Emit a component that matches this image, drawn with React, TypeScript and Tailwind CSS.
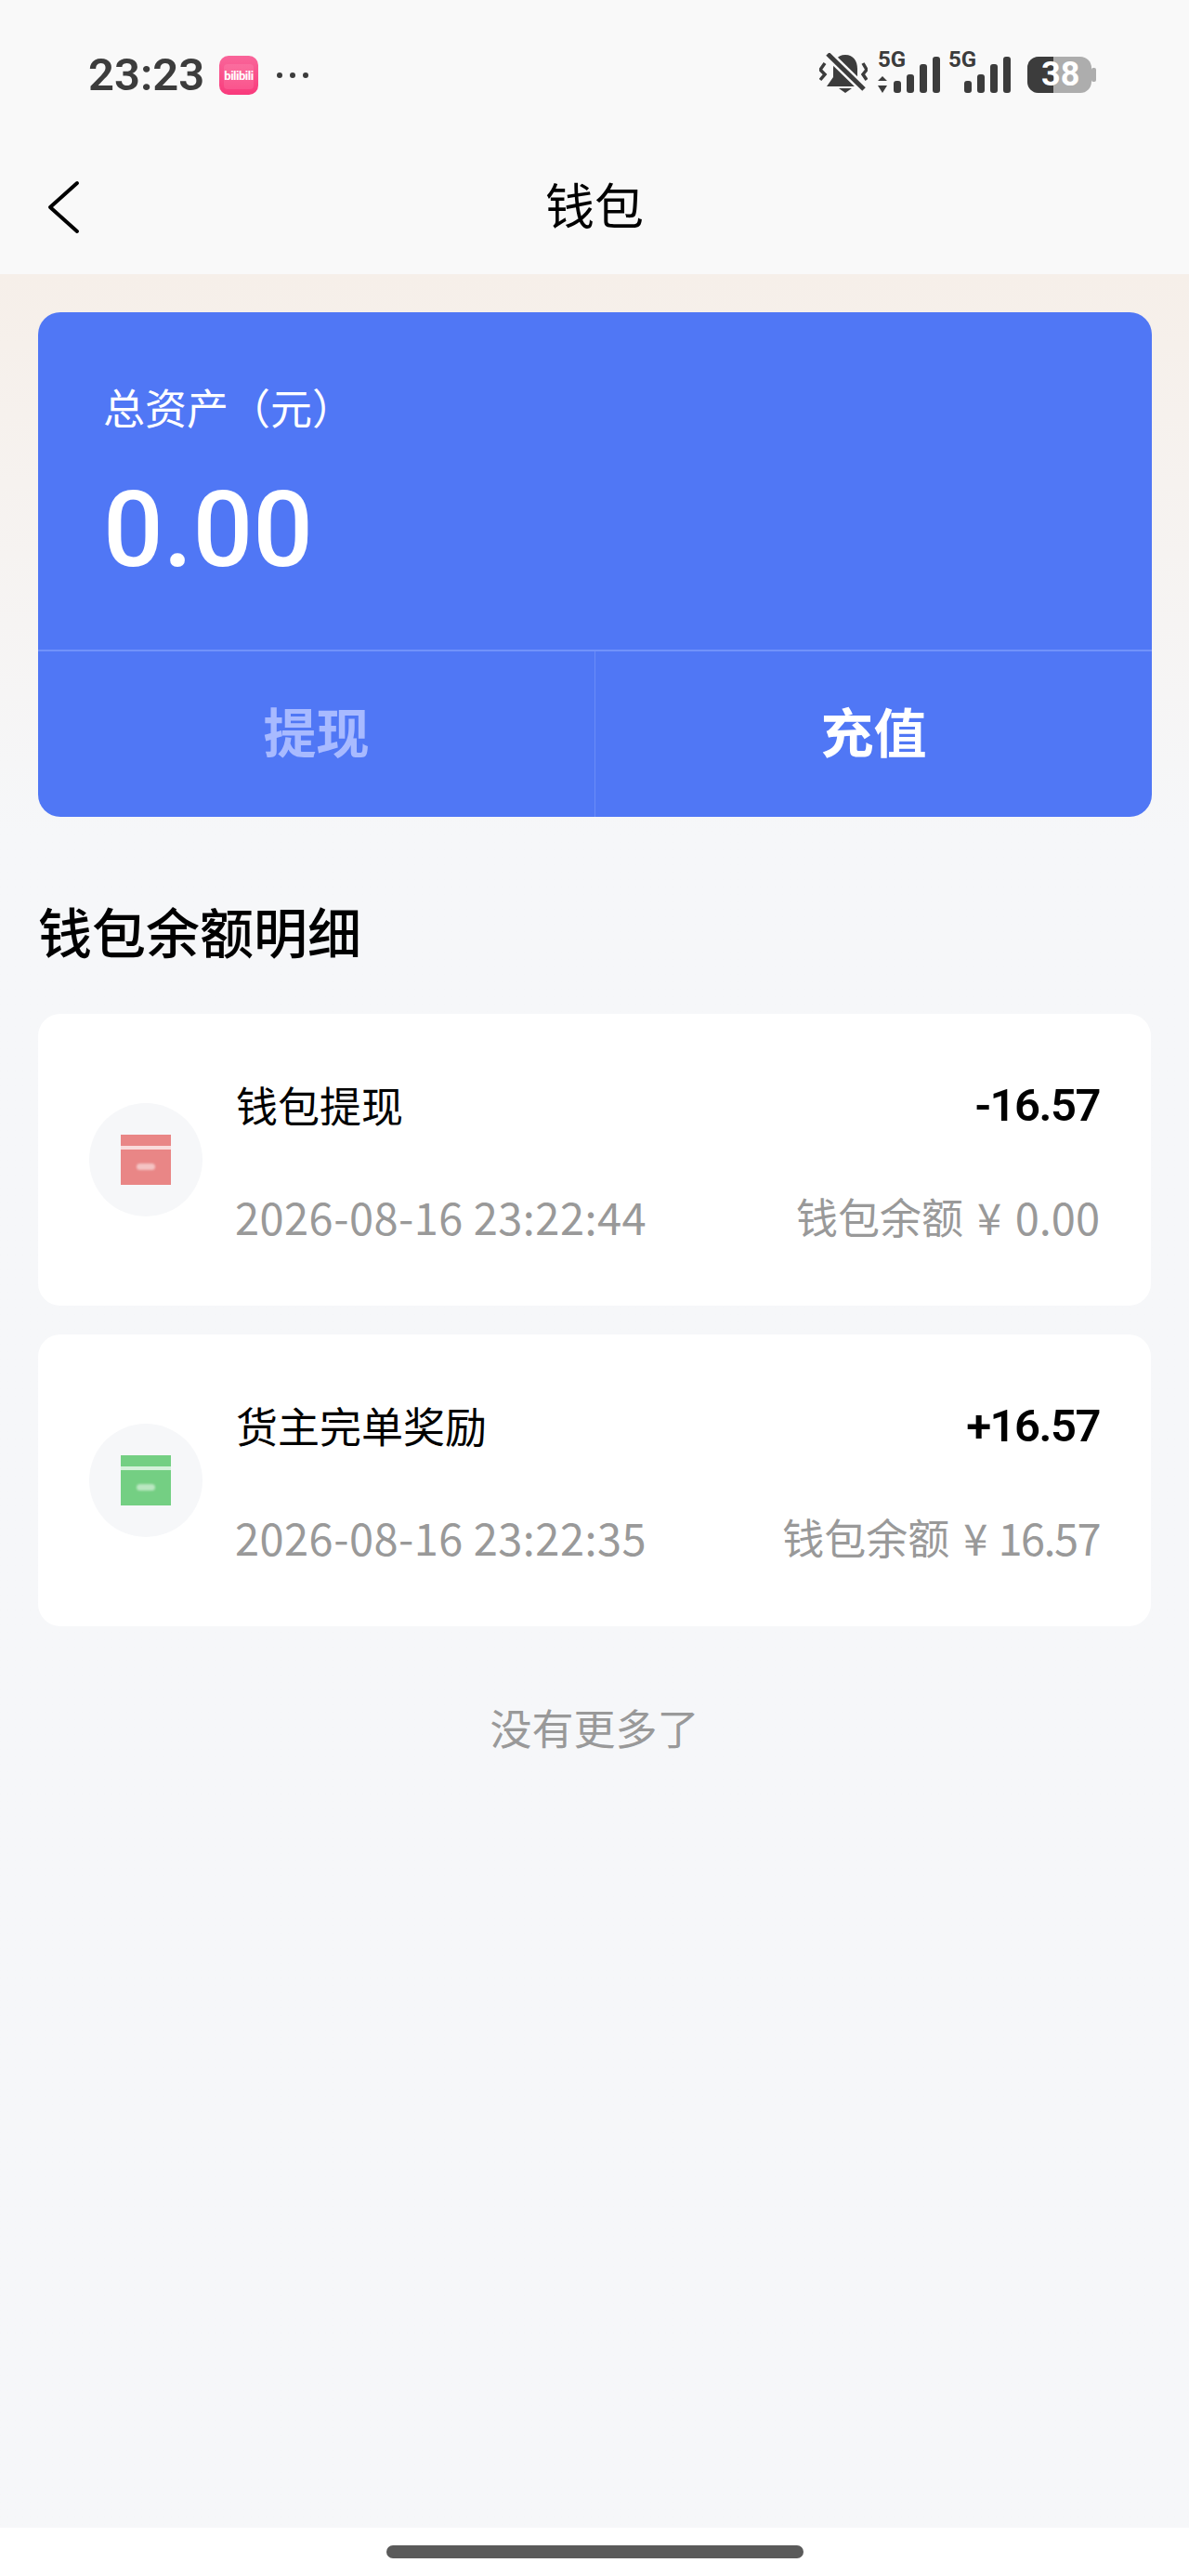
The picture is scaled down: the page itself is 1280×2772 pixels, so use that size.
import React from 'react'

const font = { fontFamily: '"Noto Sans CJK SC", "Noto Sans", sans-serif' }

type Record = {
  id: number
  title: string
  amount: string
  time: string
  balance: string
  color: string
  balanceClass: string
}

const records: Record[] = [
  { id: 1, title: '钱包提现', amount: '-16.57', time: '2026-08-16 23:22:44', balance: '¥ 0.00', color: 'bg-[#e98686]', balanceClass: 'tracking-[0px]' },
  { id: 2, title: '货主完单奖励', amount: '+16.57', time: '2026-08-16 23:22:35', balance: '¥ 16.57', color: 'bg-[#74cf83]', balanceClass: 'tracking-[-1.6px]' },
]

const Signal = ({ data }: { data?: boolean }) => (
  <div className="relative w-[68px] h-[43px]">
    <span className="absolute left-0 top-[-6px] text-[24px] leading-[26px] font-bold text-[#3c3c3c] font-['Roboto']">5G</span>
    <svg className="absolute left-0 top-0" width="68" height="43" viewBox="0 0 68 43" fill="#3c3c3c">
      {data && <path d="M5 25 L10 30 H0 Z M5 43 L0 35 H10 Z" />}
      <rect x="17" y="30" width="8" height="13" rx="3" />
      <rect x="31" y="23" width="8" height="20" rx="3" />
      <rect x="45" y="12" width="8" height="31" rx="3" />
      <rect x="59" y="4" width="8" height="39" rx="3" />
    </svg>
  </div>
)

const Wallet = ({ color }: { color: string }) => (
  <div className="w-[122px] h-[122px] rounded-full bg-[#f6f7f9] flex items-center justify-center shrink-0">
    <div className={`w-[54px] h-[54px] ${color} flex flex-col`}>
      <div className="h-[4px] mt-[12px] bg-white/70" />
      <div className="w-[20px] h-[7px] mt-[15px] ml-[17px] rounded-sm bg-white/50 blur-[1px]" />
    </div>
  </div>
)

const App = () => {
  return (
    <div className="w-[1280px] h-[2772px] flex flex-col bg-[#f6f7f9] overflow-hidden" style={font}>
      <div className="bg-[#f9f9f9] h-[295px] shrink-0">
        <div className="h-[140px] flex justify-between pl-[95px] pr-[100px] pt-[57px]">
          <div className="flex items-start">
            <span className="text-[49px] leading-[50px] mt-[-1px] font-semibold text-[#3c3c3c] font-['Roboto'] w-[141px]">23:23</span>
            <div className="relative w-[42px] h-[42px] mt-[3px] rounded-[10px] bg-gradient-to-b from-[#f9659a] to-[#f9397c] flex items-center justify-center">
              <div className="absolute left-[5px] right-[5px] top-[9px] bottom-[6px] rounded-[4px] bg-white/10" />
              <span className="relative text-white text-[13px] leading-none font-bold font-['Roboto'] tracking-[-0.5px]">bilibili</span>
            </div>
            <div className="flex gap-[8px] ml-[20px] mt-[21px]">
              <div className="w-[6px] h-[6px] rounded-full bg-[#3c3c3c]" />
              <div className="w-[6px] h-[6px] rounded-full bg-[#3c3c3c]" />
              <div className="w-[6px] h-[6px] rounded-full bg-[#3c3c3c]" />
            </div>
          </div>
          <div className="flex items-start">
            <svg width="52" height="43" viewBox="0 0 52 43" fill="#3c3c3c">
              <path d="M28 2 C37 2 41 9 41 17 V26 L46 36 H8 L15 26 V17 C15 9 19 2 28 2 Z" />
              <path d="M21 38 H35 L28 43 Z" />
              <path d="M9 1 L48 39" stroke="#f9f9f9" strokeWidth="10" />
              <path d="M9 1 L48 39" stroke="#3c3c3c" strokeWidth="5" />
              <path d="M6 11 L1 18 L6 23 L1 29 M47 11 L51 18 L47 23 L51 29" fill="none" stroke="#3c3c3c" strokeWidth="3.5" />
            </svg>
            <div className="ml-[11px]"><Signal data /></div>
            <div className="ml-[8px]"><Signal /></div>
            <div className="relative ml-[17px] w-[74px] h-[39px] mt-[4px]">
              <svg width="74" height="39" viewBox="0 0 74 39">
                <rect x="0" y="0" width="69" height="39" rx="12" fill="#adadad" />
                <rect x="69" y="12" width="5" height="15" rx="2" fill="#adadad" />
                <path d="M12 0 H28 V39 H12 A12 12 0 0 1 0 27 V12 A12 12 0 0 1 12 0 Z" fill="#3c3c3c" />
              </svg>
              <span className="absolute left-[15px] top-[-2px] text-[36px] leading-[42px] font-bold text-white font-['Roboto']">38</span>
            </div>
          </div>
        </div>
        <div className="relative h-[155px] flex items-center justify-center">
          <svg className="absolute left-[50px] top-[54px]" width="36" height="58" viewBox="0 0 36 58" fill="none" stroke="#000" strokeWidth="4" strokeLinecap="round" strokeLinejoin="round">
            <path d="M33 3 L4 29 L33 55" />
          </svg>
          <span className="text-[53px] leading-none text-black mt-[3px]">钱包</span>
        </div>
      </div>

      <div className="flex-1 flex flex-col bg-gradient-to-b from-[#f6efe9] to-[#f6f7f9] to-[600px] px-[41px] pt-[41px]">
        <div className="h-[543px] w-[1199px] shrink-0 rounded-[24px] bg-[#5077f5] flex flex-col overflow-hidden">
          <div className="h-[365px] border-b-2 border-[#7192fa] pl-[70px] pt-[74px]">
            <div className="text-[45px] leading-[56px] text-white">总资产（元）</div>
            <div className="text-[114px] leading-[130px] font-medium text-white font-['Roboto'] mt-[39px]">0.00</div>
          </div>
          <div className="flex-1 flex">
            <div className="flex-1 flex items-center justify-center border-r border-[#6a8cf8] pb-[8px] text-[57px] font-bold text-[#a8baff]">提现</div>
            <div className="flex-1 flex items-center justify-center pb-[8px] text-[57px] font-bold text-white">充值</div>
          </div>
        </div>

        <div className="text-[58px] leading-[80px] font-medium text-black mt-[82px]">钱包余额明细</div>

        <div className="flex flex-col gap-[31px] mt-[50px]">
          {records.map((record) => (
            <div key={record.id} className="h-[314px] bg-white rounded-[24px] flex items-center pl-[55px] pr-[55px]">
              <Wallet color={record.color} />
              <div className="flex-1 ml-[36px] flex flex-col gap-[58px] mt-[2px]">
                <div className="flex justify-between items-center h-[62px]">
                  <span className="text-[45px] leading-[62px] text-black">{record.title}</span>
                  <span className="text-[49px] leading-[62px] font-semibold text-black font-['Roboto'] tracking-[-1.5px] mt-[2px]">{record.amount}</span>
                </div>
                <div className="flex justify-between items-center h-[62px] text-[#999999]">
                  <span className="text-[47px] leading-[62px] tracking-[0.45px] ml-[-1px]">{record.time}</span>
                  <span className="flex items-center">
                    <span className="text-[45px] leading-[62px]">钱包余额</span>
                    <span className={`text-[47px] leading-[62px] ml-[15px] [word-spacing:4px] ${record.balanceClass}`}>{record.balance}</span>
                  </span>
                </div>
              </div>
            </div>
          ))}
        </div>

        <div className="text-center text-[45px] leading-[60px] text-[#999999] mt-[79px]">没有更多了</div>
      </div>

      <div className="h-[52px] shrink-0 bg-white flex justify-center pt-[19px]">
        <div className="w-[449px] h-[14px] rounded-full bg-[#5a5a5a]" />
      </div>
    </div>
  )
}

export default App
